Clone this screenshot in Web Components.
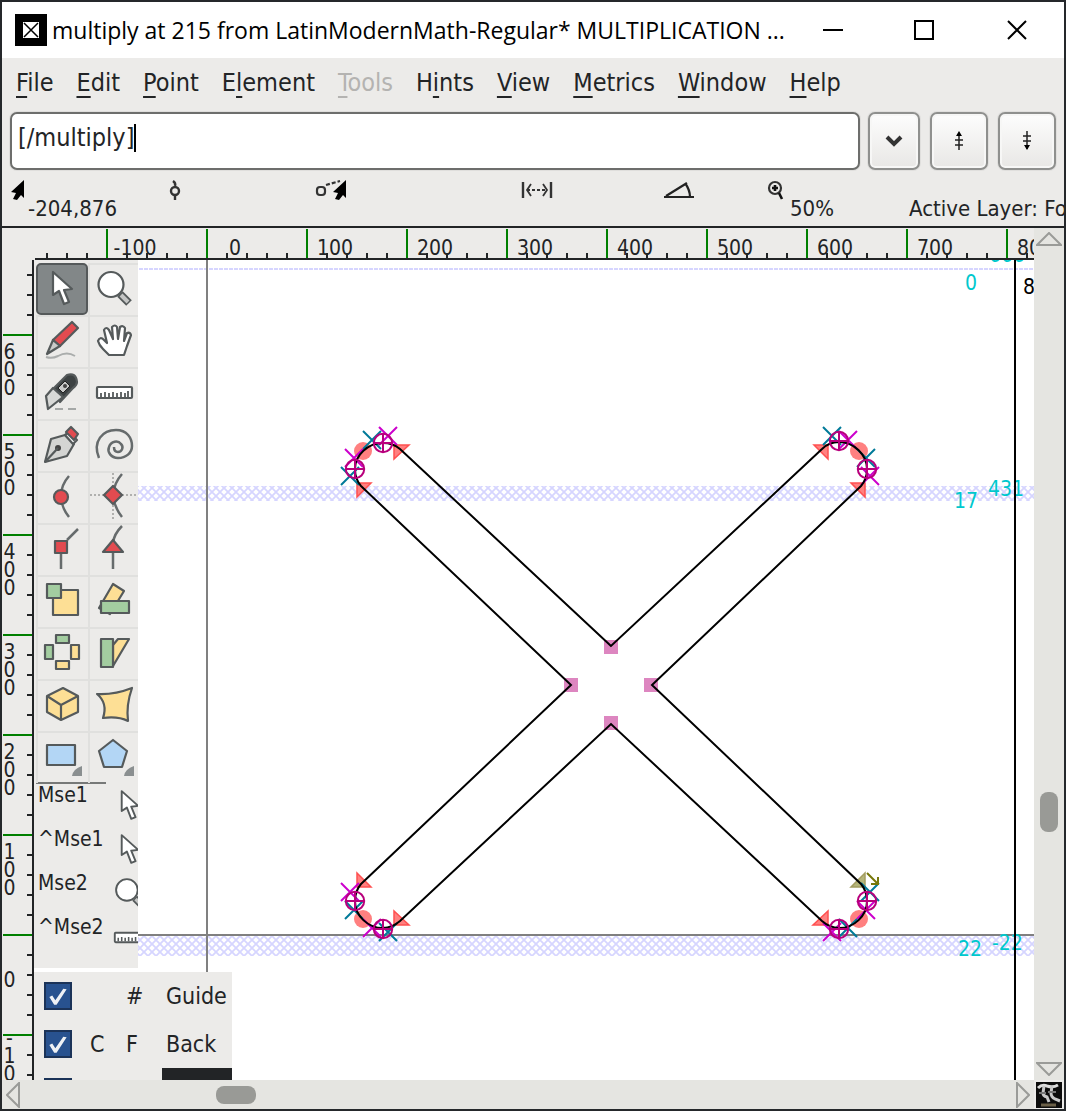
<!DOCTYPE html>
<html lang="en">
<head>
<meta charset="utf-8">
<title>multiply at 215</title>
<style>
html,body{margin:0;height:100%;overflow:hidden;background:#25282b}
body{font-family:"DejaVu Sans Condensed","Noto Sans",sans-serif;color:#222426}
</style>
</head>
<body>
<glyph-window></glyph-window>
<script>
const define = (name, css, html, setup) => customElements.define(name, class extends HTMLElement {
  constructor() {
    super();
    const t = document.createElement('template');
    t.innerHTML = `<style>*{box-sizing:border-box}svg{display:block}button{font:inherit;color:inherit;border:0;padding:0;margin:0;background:none}${css}</style>${html}`;
    this.attachShadow({mode: 'open'}).append(t.content.cloneNode(true));
    if (setup) setup(this, this.shadowRoot);
  }
});

define('title-bar', `
:host{display:flex;align-items:center;height:56px;background:#fff;color:#000;padding-left:13px}
.icon{flex:none}
h1{flex:1;min-width:0;margin:0 0 0 5px;font:400 23px/32px "Open Sans","Noto Sans",sans-serif;white-space:nowrap}
nav{display:flex;flex:none}
button{width:92px;height:56px;display:flex;align-items:center;justify-content:center}
button:first-child{width:90px}button:last-child{width:94px}`,
`<svg class="icon" width="32" height="32" viewBox="0 0 32 32"><path d="M0 0h32v32H0z"/><path fill="#fff" d="M8 8h16v16H8z"/><path d="M9 9l14 14M23 9L9 23" stroke="#000" stroke-width="1.5"/></svg>
<h1><slot></slot></h1>
<nav>
<button aria-label="Minimize"><svg width="20" height="20"><path d="M0 9h20v2H0z"/></svg></button>
<button aria-label="Maximize"><svg width="20" height="20"><path d="M1 1h18v18H1z" fill="none" stroke="#000" stroke-width="2"/></svg></button>
<button aria-label="Close"><svg width="20" height="20"><path d="M1 1l18 18M19 1L1 19" stroke="#000" stroke-width="2"/></svg></button>
</nav>`);

define('menu-bar', `
:host{display:flex;align-items:center;gap:23px;height:50px;padding:0 14px}
button{font-size:25px;line-height:32px;white-space:nowrap}
button:disabled{color:#b4b3b1}
u{text-underline-offset:5px;text-decoration-thickness:2px;text-decoration-skip-ink:none}`,
['_File','_Edit','_Point','E_lement','-_Tools','H_ints','_View','_Metrics','_Window','_Help'].map(m =>
  `<button${m[0] === '-' ? ' disabled' : ''}>${m.replace('-', '').replace(/_(.)/, '<u>$1</u>')}</button>`).join(''));

define('word-bar', `
:host{display:flex;gap:10px;height:66px;padding:4px 8px 4px 8px}
.field{flex:1;min-width:0;display:flex;align-items:center;height:58px;margin-right:-2px;padding:0 6px 6px;background:#fff;border:2px solid #6d6e6c;border-radius:7px;box-shadow:0 0 0 1px #dfdedc}
input{field-sizing:content;font:inherit;font-size:25px;line-height:32px;color:inherit;border:0;padding:0;background:none;outline:none}
.caret{width:2px;height:28px;background:#000}
button{flex:none;width:58px;height:58px;display:flex;align-items:center;justify-content:center;border:2px solid #8f908e;border-radius:7px;background:linear-gradient(#fdfdfd,#e8e7e5);box-shadow:0 0 0 1px #e0dfdd,inset 0 0 0 2px #f7f7f6}
.drop{width:52px}`,
`<label class="field"><input aria-label="Glyph word list" value="[/multiply]"><span class="caret"></span></label>
<button class="drop" aria-label="Show list"><svg width="18" height="14"><path d="M2 3l7 7 7-7" fill="none" stroke="#333" stroke-width="4"/></svg></button>
<button aria-label="Previous"><svg width="10" height="20"><path d="M5 2v17M1 9h8M1 14h8" stroke="#222" stroke-width="1.5"/><path d="M5 0l3 5H2z"/></svg></button>
<button aria-label="Next"><svg width="10" height="20"><path d="M5 0v18M1 5h8M1 10h8" stroke="#222" stroke-width="1.5"/><path d="M5 19l3-5H2z"/></svg></button>`);

const pointer = '<path d="M14 0v18l-3-3-4 5-4-1 3-6-5-1z"/>';
define('info-bar', `
:host{display:flex;height:54px;padding:6px 0 0 8px;overflow:hidden;border-bottom:2px solid #222426;font-size:22px;line-height:26px;white-space:nowrap}
div{flex:none;display:flex}
svg{flex:none}
span{margin-top:16px}`,
`<div style="width:157px"><svg width="18" height="22">${pointer}</svg><span>-204,876</span></div>
<div style="width:147px"><svg width="18" height="22"><circle cx="8" cy="11" r="4" fill="none" stroke="#333" stroke-width="2.4"/><path d="M8 16v4M8 6q1-3-2-5" fill="none" stroke="#333" stroke-width="2.4"/></svg></div>
<div style="width:206px"><svg width="34" height="22"><rect x="3" y="7" width="8" height="8" rx="3" fill="none" stroke="#333" stroke-width="2.2"/><path d="M12 5l14-4" stroke="#333" stroke-width="2.2" stroke-dasharray="4 2"/><g transform="translate(18)">${pointer}</g></svg></div>
<div style="width:142px"><svg width="34" height="22"><g fill="none" stroke="#333"><path d="M3 2v16M31 2v16" stroke-width="2.4"/><path d="M11 4l-4 6 4 6M23 4l4 6-4 6" stroke-width="1.8"/><path d="M7 10h20" stroke-width="2" stroke-dasharray="3 2"/></g></svg></div>
<div style="width:104px"><svg width="34" height="22"><g fill="none" stroke="#222" stroke-width="2.2"><path d="M2 17h30M4 16L25 3M23 3q5 7 5 14"/></g></svg></div>
<div style="width:143px"><svg width="24" height="22"><circle cx="9" cy="8" r="6" fill="none" stroke="#333" stroke-width="2.2"/><path d="M6 8h6M9 5v6M13 13l3 6" stroke="#111" stroke-width="2.6"/></svg><span>50%</span></div>
<div><span>Active Layer: Foreground</span></div>`);

define('top-ruler', `
:host{display:flex;height:32px;padding-left:33px;overflow:hidden;font-size:21px;line-height:22px}
div{flex:none;width:100px;height:32px;padding-top:9px;border-bottom:2px solid #222426;background:linear-gradient(green,green) 0 1px/2px 100% no-repeat,linear-gradient(90deg,#222426 2px,transparent 2px) 0 100%/20px 5px repeat-x}
.lead{width:71px;background:linear-gradient(90deg,#222426 2px,transparent 2px) 11px 100%/20px 5px repeat-x}
span{display:block;width:58px;text-align:center}`,
`<div class="lead"></div>` + [-100,0,100,200,300,400,500,600,700,800,900,1000,1100,1200,1300,1400].map(n => `<div><span>${n}</span></div>`).join(''));

define('side-ruler', `
:host{display:block;width:32px;height:100%;overflow:hidden;font-size:21px;line-height:18px;border-right:2px solid #222426}
div{height:100px;padding:9px 0 0 1px;background:linear-gradient(green,green) 1px 0/100% 2px no-repeat,linear-gradient(#222426 2px,transparent 2px) 100% 0/5px 20px repeat-y}
.lead{height:74px;background:linear-gradient(#222426 2px,transparent 2px) 100% 14px/5px 20px repeat-y}
span{display:block;width:13px;text-align:center}
.zero{padding-top:37px}.neg{padding-top:0}.neg span:first-child{height:13px;line-height:9px}`,
`<div class="lead"></div>` + ['600','500','400','300','200','100','0','-100'].map(n =>
 `<div class="${n === '0' ? 'zero' : n[0] === '-' ? 'neg' : ''}">${[...n].map(c => `<span>${c}</span>`).join('')}</div>`).join(''));

const xmark = (x, y, c) => `<path stroke="${c}" d="M${x-9} ${y-9}l18 18m0-18l-18 18"/>`;
const T = '#007a99', M = '#cc00cc';
define('glyph-canvas', `
:host{display:block;background:#fff;overflow:hidden}
svg{width:100%;height:100%}
text{font-size:21px;fill:#00c8cd}`,
`<svg>
<defs><pattern id="hatch" width="8" height="8" patternUnits="userSpaceOnUse"><path d="M-1-1l10 10M9-1L-1 9" stroke="#d6d5ff" stroke-width="1.8"/></pattern></defs>
<g transform="translate(-34 -260)">
<path d="M34 269h4000" stroke="#d6d5ff" stroke-width="2" stroke-dasharray="4 1"/>
<rect x="34" y="486" width="100%" height="15" fill="url(#hatch)"/>
<rect x="34" y="936" width="100%" height="20" fill="url(#hatch)"/>
<path d="M207 260v2000M34 935h4000" stroke="#808080" stroke-width="2"/>
<text x="989" y="262">666</text><text x="965" y="290">0</text><text x="954" y="508">17</text><text x="988" y="496">431</text>
<text x="958" y="956">22</text><text x="992" y="950">-22</text><text x="1023" y="294" style="fill:#000">800</text>
<path d="M1015 260v2000" stroke="#000" stroke-width="2"/>
<g fill="#dd86c0"><path d="M604 640h14v14h-14zM564 678h14v14h-14zM644 678h14v14h-14zM604 716h14v14h-14z"/></g>
<g fill="#ff8080"><circle cx="363" cy="451" r="9"/><circle cx="859" cy="451" r="9"/><circle cx="363" cy="919" r="9"/><circle cx="859" cy="919" r="9"/></g>
<g fill="#ff8080" stroke="#ff5050" stroke-width="1.5"><path d="M394 445h15l-15 14zM357 483h14l-14 14zM828 445h-14l14 14zM865 483h-14l14 14zM357 873v14h14zM394 911v14h15zM828 911v14h-15z"/></g>
<path d="M865 873v14h-14z" fill="#b5b57a" stroke="#a39d60" stroke-width="1.5"/>
<g fill="none" stroke-width="2">
${xmark(372,440,T)}${xmark(388,436,M)}${xmark(354,458,M)}${xmark(350,476,T)}
${xmark(832,436,T)}${xmark(848,440,M)}${xmark(866,458,T)}${xmark(870,476,M)}
${xmark(350,892,M)}${xmark(354,910,T)}${xmark(372,928,M)}${xmark(388,932,T)}
${xmark(870,892,T)}${xmark(866,910,M)}${xmark(848,928,T)}${xmark(832,932,M)}
<path stroke="#77770a" d="M867 873l11 11m0-7v7h-7"/>
<path stroke="#000" d="M611 646L400 449Q393 443 383 443C368 443 355 455 355 469Q355 479 361 486L571 685L361 884Q355 891 355 901C355 916 368 928 383 928Q392 928 400 921L611 724L822 921Q830 928 839 928C854 928 867 916 867 901Q867 891 861 884L652 685L861 486Q867 479 867 469C867 455 854 442 839 442Q829 442 822 449Z"/>
<g stroke="#b8007c">${[[383,443],[355,469],[839,441],[867,469],[355,901],[383,929],[867,901],[839,929]].map(([x,y]) => `<circle cx="${x}" cy="${y}" r="9.2"/><path d="M${x-9} ${y}h18M${x} ${y-9}v18"/>`).join('')}</g>
</g></g></svg>`);

const S = 'stroke="#555a5b" stroke-width="2.2" stroke-linejoin="round"';
const arrow = `<path d="M17 9v23l6-4 5 13 5-2-5-12 8-1z" fill="#fff" ${S}/>`;
const lens = `<path d="M32 31l9 9" stroke="#555a5b" stroke-width="8"/><path d="M33 32l7 7" stroke="#c4c5c4" stroke-width="4"/><circle cx="23" cy="21.5" r="12.5" fill="#fff" ${S}/>`;
const scale = `<rect x="9" y="20" width="35" height="11" rx="1" fill="#fff" ${S}/><path d="M13 30v-4m4 4v-5m4 5v-4m4 4v-5m4 5v-4m4 4v-5m4 5v-4m3 4v-6" stroke="#555a5b" stroke-width="1.8"/>`;
const G = 'fill="#a3cda0"', Y = 'fill="#fddf95"', R = 'fill="#e24b50"', B = 'fill="#b3d6f5"';
const more = '<path d="M36 45q1-7 10-10v10z" fill="#8a8f90"/>';
const tools = [
['Pointer', arrow],
['Magnify', lens],
['Freehand', `<path d="M36 7l6 6-18 18-7-6z" ${R} ${S}/><path d="M17 25l7 6-13 8z" fill="#c9cac9" ${S}/><path d="M10 42q6 2 12-1 9-5 17 0" fill="none" stroke="#aaadac" stroke-width="2"/>`],
['Scroll', `<path d="M21 40l-6-6q-4-4-5-8 2-5 6-1l3 3-3-13q2-4 5 0l4 9-1-12q3-3 5 0l1 12 2-12q3-2 5 1l-1 13 3-8q3-1 4 2l-4 11-3 9z" fill="#fff" ${S}/>`],
['Knife', `<path d="M17 22L31 8q9-3 10 7 0 3-4 6L24 35z" fill="#3d4243" ${S}/><path d="M10 29l7-8 10 9-15 12z" fill="#d8d9d7" ${S}/><path d="M29 14l5 5-7 7-5-5z" fill="#c9cac9" stroke="#222"/><circle cx="29" cy="19" r="2" fill="#444"/><path d="M19 42h8m5 0h8" stroke="#a5a8a7" stroke-width="2"/>`],
['Ruler', scale],
['Pen', `<path d="M9 43l6-23 14-4 9 9-7 12z" fill="#d4d5d3" ${S}/><path d="M29 16l4-3 8 8-4 4z" fill="#fff" ${S}/><path d="M30 13l5-5 7 7-4 6z" ${R} ${S}/><circle cx="22" cy="29" r="3" fill="#444"/><path d="M9 43l13-14" ${S}/>`],
['Spiral', `<path d="M11 39C4 22 15 11 28 11c11 0 16 8 16 16 0 7-6 12-14 12-7 0-11-6-9-11 2-6 9-7 12-3 3 3 1 8-3 8-3 0-4-2-4-5" fill="none" stroke="#666b6c" stroke-width="2.5"/>`],
['Curve point', `<path d="M33 5q-8 9-8 20t8 21" fill="none" stroke="#666b6c" stroke-width="2.5"/><circle cx="25" cy="26" r="7" ${R} ${S}/>`],
['HV curve point', `<path d="M2 24h48M25 2v46" stroke="#b0b0ae" stroke-width="2" stroke-dasharray="2 2"/><path d="M34 3q-8 9-9 21 1 12 9 22" fill="none" stroke="#666b6c" stroke-width="2.5"/><path d="M25 15l9 9-9 9-9-9z" ${R} ${S}/>`],
['Corner point', `<path d="M31 17L42 6M25 30v16" stroke="#666b6c" stroke-width="2.5"/><path d="M19 18h12v12H19z" ${R} ${S}/>`],
['Tangent point', `<path d="M34 3q-8 8-9 17M25 30v16" fill="none" stroke="#666b6c" stroke-width="2.5"/><path d="M25 17l10 12H15z" ${R} ${S}/>`],
['Scale', `<path d="M17 15h25v25H17z" ${Y} ${S}/><path d="M11 9h14v14H11z" ${G} ${S}/>`],
['Rotate', `<path d="M25 9l11 7-14 23-11-6z" ${Y} ${S}/><path d="M13 26h28v12H13z" ${G} ${S}/>`],
['Flip', `<path d="M20 8h13v8H20zM9 18h8v14H9z" ${G} ${S}/><path d="M35 18h8v14h-8zM20 34h13v8H20z" ${Y} ${S}/>`],
['Skew', `<path d="M25 18l5-6h11L25 39z" ${Y} ${S}/><path d="M13 12h12v28H13z" ${G} ${S}/>`],
['Rotate 3D', `<path d="M27 9l15 8v16l-17 8-14-8V17z" ${Y} ${S}/><path d="M11 17l14 9 17-9M25 26v15" fill="none" ${S}/>`],
['Perspective', `<path d="M9 15q17 1 35-6-6 17-4 33-10-5-25-3 5-15-6-24z" ${Y} ${S}/>`],
['Rectangle', `<path d="M11 14h28v20H11z" ${B} ${S}/>${more}`],
['Polygon', `<path d="M25 9l14 11-5 16H16l-5-16z" ${B} ${S}/>${more}`]
];
define('tool-palette', `
:host{display:block;width:104px;height:708px;padding-top:3px;background:#ecebe9;overflow:hidden}
.grid{display:grid;grid-template-columns:52px 52px;width:104px;margin-left:2px}
button{width:52px;height:52px;border-left:2px solid #e0e0de;border-top:2px solid #e0e0de}
button svg{margin:-2px 0 0 -2px}
button:first-child{background:#828788;border:2px solid #55595a;border-radius:5px}
hr{width:70px;height:2px;margin:-1px 0 0 2px;border:0;background:#777978}
.m{display:flex;height:44px;font-size:21px;line-height:22px}
.m span{width:73px;padding-left:4px;flex:none;white-space:nowrap}
.m svg{flex:none;margin-top:-1px}`,
`<div class="grid">${tools.map(([n, s]) => `<button aria-label="${n}"><svg width="52" height="52">${s}</svg></button>`).join('')}</div><hr>` +
[['Mse1', arrow],['^Mse1', arrow],['Mse2', lens],['^Mse2', scale]].map(([n, s]) =>
`<div class="m"><span>${n}</span><svg width="45" height="44" viewBox="0 0 52 50">${s}</svg></div>`).join(''));

define('layer-list', `
:host{display:block;width:198px;height:108px;overflow:hidden;background:#ecebe9;font-size:23px;line-height:28px}
label{display:grid;grid-template-columns:50px 36px 42px 70px;align-items:center;height:48px}
label span{white-space:nowrap}
span:nth-child(2),span:nth-child(3){padding-left:6px}
span:nth-child(4){padding-left:4px;line-height:48px}
.on span:nth-child(4){background:#222426;color:#fff}
input{appearance:none;width:28px;height:28px;margin:0 0 0 10px;background:#28528f;border:2px solid #1b3358}
input::before{content:"";display:block;width:24px;height:24px;background:#eef1f5;clip-path:polygon(14% 54%,26% 48%,39% 68%,72% 20%,86% 22%,44% 86%,34% 86%)}`,
[['','#','Guide'],['C','F','Back'],['C','F','Fore']].map((r, i) =>
`<label class="${i === 2 ? 'on' : ''}"><input type="checkbox" checked>${r.map(c => `<span>${c}</span>`).join('')}</label>`).join(''));

define('scroll-bar', `
:host{display:flex;flex-direction:column;justify-content:space-between;align-items:center;background:#e5e5e1}
:host([horizontal]){flex-direction:row}
svg{flex:none}
button{display:block;padding:4px 2px}
:host([horizontal]) button{padding:2px 4px}
i{flex:none;width:18px;height:40px;border-radius:8px;background:#999a96}
:host([horizontal]) i{width:40px;height:18px}
.a{flex:var(--before)}.b{flex:var(--after)}`,
'', (el, root) => {
  const h = el.hasAttribute('horizontal');
  const svg = d => `<svg width="${h ? 14 : 26}" height="${h ? 26 : 14}"><path d="${d}" fill="none" stroke="#9a9b98" stroke-width="2"/></svg>`;
  root.innerHTML += `<button aria-label="Back">${svg(h ? 'M13 1v24L1 13z' : 'M1 13h24L13 1z')}</button><span class="a"></span><i></i><span class="b"></span><button aria-label="Forward">${svg(h ? 'M1 1v24l12-12z' : 'M1 1h24L13 13z')}</button>`;
});

define('glyph-window', `
:host{display:flex;flex-direction:column;height:100vh;border:2px solid #25282b;background:#ecebe9;overflow:hidden;box-sizing:border-box}
title-bar,menu-bar,word-bar,info-bar{flex:none}
main{flex:1;min-height:0;display:grid;grid-template:32px minmax(0,1fr) 29px/32px minmax(0,1fr) 30px}
top-ruler{grid-area:1/1/2/3}
side-ruler{grid-area:2/1}
.view{grid-area:2/2;position:relative;display:grid;min-width:0;min-height:0}
tool-palette{position:absolute;left:0;top:0}
layer-list{position:absolute;left:0;bottom:0}
.v{grid-area:1/3/3/4;--before:542;--after:226}
.h{grid-area:3/1/4/3;--before:192;--after:756}
.corner{grid-area:3/3;padding:2px 0 0 2px}`,
`<title-bar>multiply at 215 from LatinModernMath-Regular* MULTIPLICATION ...</title-bar>
<menu-bar></menu-bar><word-bar></word-bar><info-bar></info-bar>
<main><top-ruler></top-ruler><side-ruler></side-ruler>
<div class="view"><glyph-canvas></glyph-canvas><tool-palette></tool-palette><layer-list></layer-list></div>
<scroll-bar class="v"></scroll-bar><scroll-bar class="h" horizontal></scroll-bar>
<div class="corner"><svg width="26" height="26"><path d="M0 0h26v26H0z" fill="#0c0c0c"/><path d="M2 6q4-4 9-2 6 2 11-1" fill="none" stroke="#ddd" stroke-width="3"/><path d="M8 4l-1 7q0 3 4 4l2 5M16 4l-1 7q0 4 4 6l5 2" fill="none" stroke="#c8c8c8" stroke-width="3"/><path d="M3 11h7M12 10h8" fill="none" stroke="#777" stroke-width="2"/><path d="M5 23h15" stroke="#6b6048" stroke-width="3"/></svg></div>
</main>`);
</script>
</body>
</html>
